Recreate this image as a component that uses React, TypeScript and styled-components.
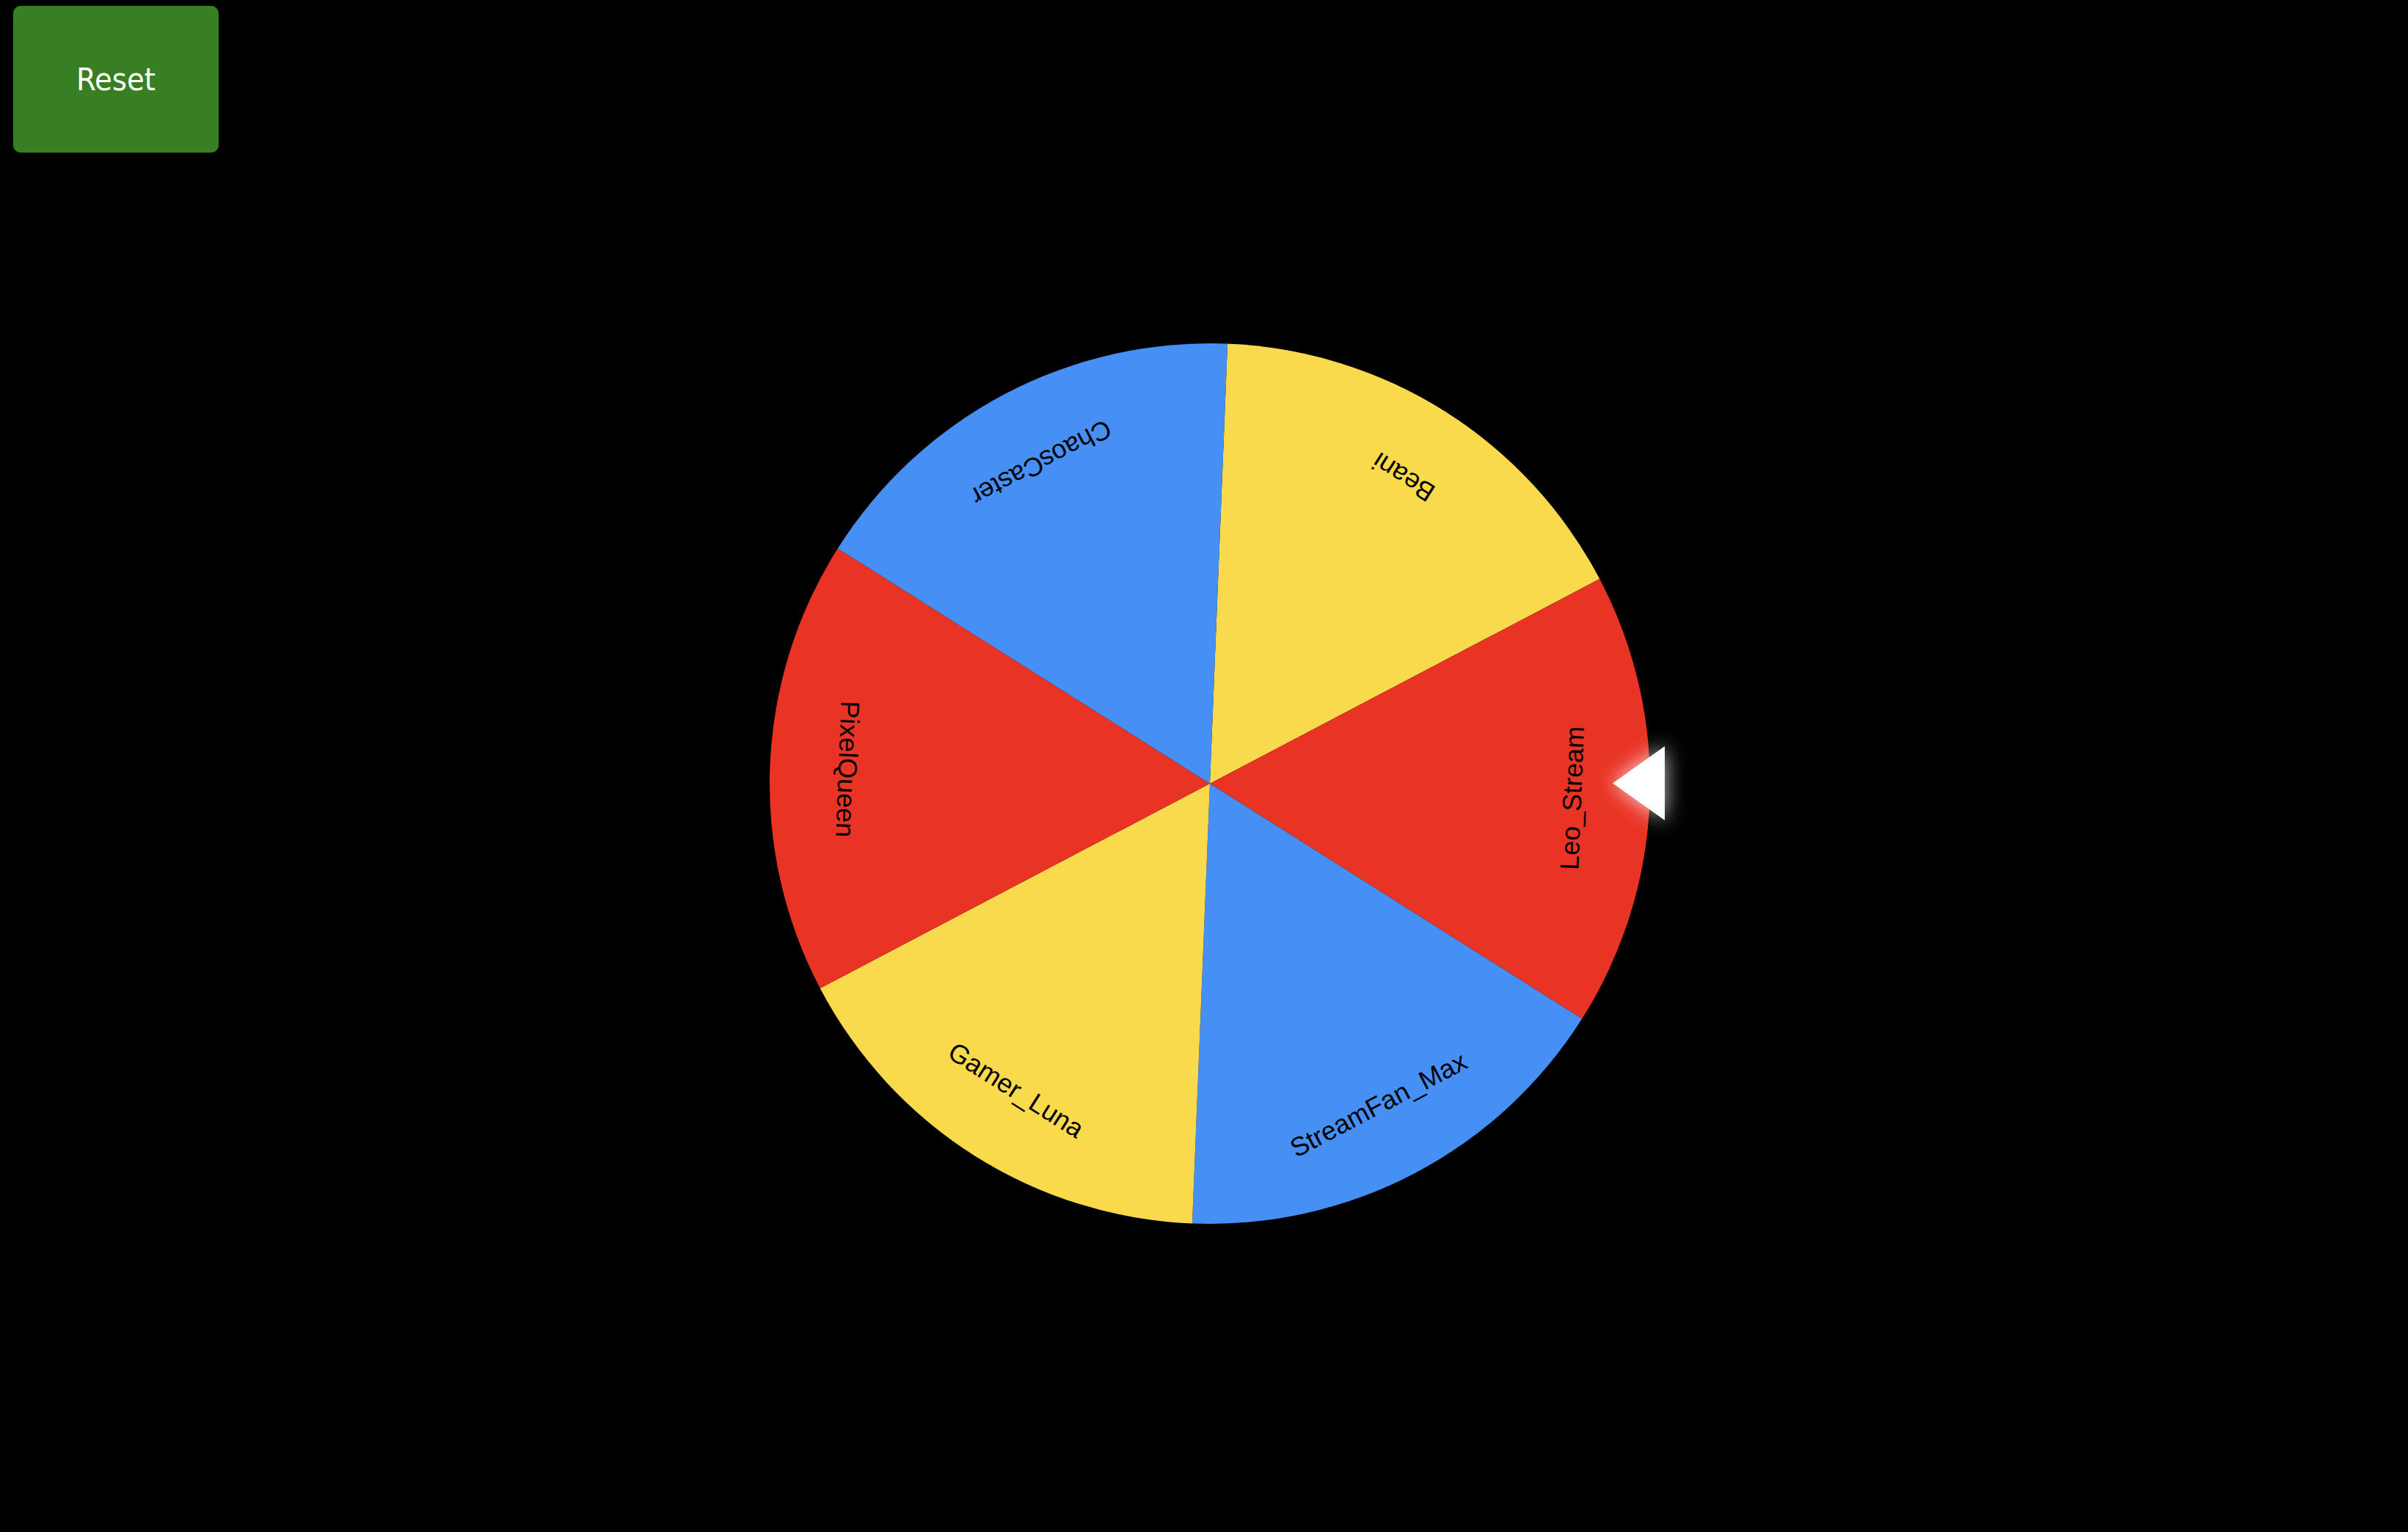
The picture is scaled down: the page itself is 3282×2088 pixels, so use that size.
import React, { FC } from "react"
import styled, { createGlobalStyle } from "styled-components"

const GlobalStyle = createGlobalStyle`
  html, body {
    margin: 0;
    padding: 0;
    background: #000;
  }
`

const Page = styled.div`
  display: grid;
  grid-template: 1fr / 1fr;
  width: 100vw;
  height: 100vh;
  background: #000;
  overflow: hidden;
`

const ResetButton = styled.button`
  grid-area: 1 / 1;
  align-self: start;
  justify-self: start;
  z-index: 1;
  margin: 8px 0 0 18px;
  width: 280px;
  height: 200px;
  border: none;
  border-radius: 10px;
  background: #387e22;
  color: #fff;
  font-family: "DejaVu Sans Condensed", "DejaVu Sans", sans-serif;
  font-size: 43px;
  cursor: pointer;
`

const WheelStage = styled.div`
  grid-area: 1 / 1;
  place-self: center;
  position: relative;
  margin: 48px 0 0 16px;
  width: 1200px;
  height: 1200px;
`

const Pointer = styled.svg`
  position: absolute;
  left: 1149px;
  top: 549px;
  width: 71px;
  height: 101px;
  overflow: visible;
  filter: drop-shadow(0 0 14px rgba(255, 255, 255, 0.8));
`

interface Entry {
  name: string
  color: string
}

const entries: Entry[] = [
  { name: "Beani", color: "#f9da4d" },
  { name: "Leo_Stream", color: "#e93425" },
  { name: "StreamFan_Max", color: "#4690f5" },
  { name: "Gamer_Luna", color: "#f9da4d" },
  { name: "PixelQueen", color: "#e93425" },
  { name: "ChaosCaster", color: "#4690f5" },
]

const R = 600
const TEXT_R = 497
const START = -87.7 // degrees, screen coords

const rad = (d: number) => (d * Math.PI) / 180

const Wheel: FC = () => {
  const step = 360 / entries.length
  return (
    <svg width={1200} height={1200} viewBox="-600 -600 1200 1200">
      {entries.map((e, i) => {
        const a0 = START + i * step
        const a1 = a0 + step
        const mid = a0 + step / 2
        const x0 = R * Math.cos(rad(a0))
        const y0 = R * Math.sin(rad(a0))
        const x1 = R * Math.cos(rad(a1))
        const y1 = R * Math.sin(rad(a1))
        const tx = TEXT_R * Math.cos(rad(mid))
        const ty = TEXT_R * Math.sin(rad(mid))
        return (
          <g key={e.name}>
            <path d={`M0 0 L${x0} ${y0} A${R} ${R} 0 0 1 ${x1} ${y1} Z`} fill={e.color} />
            <text
              x={tx}
              y={ty}
              transform={`rotate(${mid - 90} ${tx} ${ty})`}
              textAnchor="middle"
              dominantBaseline="middle"
              fontFamily="'Liberation Sans', Arial, sans-serif"
              fontSize={36}
              fill="#000"
            >
              {e.name}
            </text>
          </g>
        )
      })}
    </svg>
  )
}

const App: FC = () => {
  return (
    <Page>
      <GlobalStyle />
      <ResetButton>Reset</ResetButton>
      <WheelStage>
        <Wheel />
        <Pointer viewBox="0 0 71 101">
          <polygon points="0,50.5 71,0 71,101" fill="#fff" />
        </Pointer>
      </WheelStage>
    </Page>
  )
}

export default App
